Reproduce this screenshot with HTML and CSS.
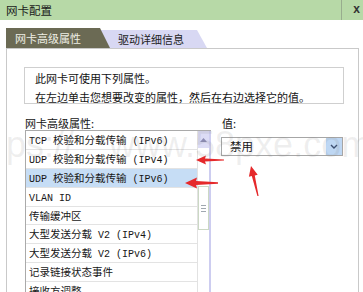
FILE: index.html
```html
<!DOCTYPE html>
<html lang="zh-CN">
<head>
<meta charset="utf-8">
<title>网卡配置</title>
<link rel="stylesheet" href="styles.css">
</head>
<body>
<div class="window">
  <div class="titlebar">
    <span class="title">网卡配置</span>
    <span class="close">x</span>
  </div>
  <div class="content">
    <div class="tabs">
      <div class="tab tab-active">网卡高级属性</div>
      <div class="tab tab-second">驱动详细信息</div>
    </div>
    <div class="panel">
      <div class="info">
        <p>此网卡可使用下列属性。</p>
        <p>在左边单击您想要改变的属性，然后在右边选择它的值。</p>
      </div>
      <div class="fields">
        <div class="col-left">
          <div class="label">网卡高级属性:</div>
          <div class="listbox">
            <ul class="items">
              <li><span class="lat">TCP </span>校验和分载传输<span class="lat"> (IPv6)</span></li>
              <li><span class="lat">UDP </span>校验和分载传输<span class="lat"> (IPv4)</span></li>
              <li class="sel"><span class="lat">UDP </span>校验和分载传输<span class="lat"> (IPv6)</span></li>
              <li><span class="lat">VLAN ID</span></li>
              <li>传输缓冲区</li>
              <li>大型发送分载<span class="lat"> V2 (IPv4)</span></li>
              <li>大型发送分载<span class="lat"> V2 (IPv6)</span></li>
              <li>记录链接状态事件</li>
              <li>接收方调整</li>
            </ul>
            <div class="scrollbar">
              <div class="sb-up">
                <svg width="7" height="4" viewBox="0 0 7 4"><path d="M0 4 L3.5 0 L7 4 Z" fill="#8c8cb4"/></svg>
              </div>
              <div class="sb-thumb">
                <span class="grip"></span>
              </div>
            </div>
          </div>
        </div>
        <div class="col-right">
          <div class="label label-value">值:</div>
          <div class="select">
            <span class="select-text">禁用</span>
            <span class="select-btn">
              <svg width="8" height="5" viewBox="0 0 8 5"><path d="M1 1 L4 4 L7 1" fill="none" stroke="#3d4f70" stroke-width="1.4"/></svg>
            </span>
          </div>
        </div>
      </div>
    </div>
  </div>
  <svg class="arrows" width="363" height="292" viewBox="0 0 363 292">
    <polygon points="196,160 206,155.5 205,158.6 224,159.4 224,160.6 205,161.4 206,164.5" fill="#e5292b"/>
    <polygon points="185,183 197,177.5 196,181 218,182.2 218,183.8 196,185 197,188.5" fill="#e5292b"/>
    <polygon points="251,166 257.7,174.7 254.8,175.4 258.6,195.9 257.4,196.1 251.8,176 248.9,176.7" fill="#e5292b"/>
  </svg>
  <div class="watermark">ps:// www.58pxe.com</div>
</div>
</body>
</html>
```
FILE: styles.css
```css
html, body {
  margin: 0;
  padding: 0;
}

body {
  background: #ffffff;
  font-family: "Noto Sans CJK SC", "Noto Sans", sans-serif;
  color: #151515;
}

.window {
  position: relative;
  width: 363px;
  height: 292px;
  overflow: hidden;
  background: #ffffff;
}

.titlebar {
  height: 20px;
  background: #b7d9a7;
  display: flex;
  align-items: center;
}

.title {
  flex: 1;
  padding-left: 6px;
  font-size: 11.5px;
  line-height: 20px;
  color: #1b1b1b;
}

.close {
  width: 22px;
  height: 20px;
  box-sizing: border-box;
  border-left: 1px solid #98ad8e;
  display: flex;
  align-items: center;
  justify-content: flex-end;
  padding-right: 3px;
  padding-bottom: 2px;
  font: bold 12px "Liberation Sans", sans-serif;
  color: #333333;
}

.content {
  padding: 8px 0 0 6px;
}

.tabs {
  display: flex;
  align-items: flex-end;
  height: 20px;
}

.tab {
  font-size: 11px;
  line-height: 1;
  display: flex;
  align-items: center;
  box-sizing: border-box;
  white-space: nowrap;
}

.tab-active {
  position: relative;
  z-index: 1;
  width: 104px;
  height: 20px;
  padding-left: 9px;
  background: #6b6a54;
  color: #eeeee4;
  clip-path: polygon(0 0, 94px 0, 100% 100%, 0 100%);
}

.tab-second {
  margin-left: -10px;
  width: 107px;
  height: 18px;
  padding-left: 18px;
  background: #d8d8f3;
  color: #222222;
  clip-path: polygon(0 0, 97px 0, 100% 100%, 0 100%);
}

.panel {
  width: 353px;
  height: 250px;
  box-sizing: border-box;
  border: 1px solid #c9c9c9;
  border-bottom: none;
  padding: 18px 0 0 17px;
}

.info {
  width: 320px;
  height: 37px;
  box-sizing: border-box;
  border: 1px solid #cfcfcf;
  padding: 1px 0 0 10px;
  font-size: 11px;
  line-height: 19px;
  color: #141414;
}

.info p {
  margin: 0;
  white-space: nowrap;
}

.fields {
  display: flex;
  margin-top: 13px;
  margin-left: 1px;
}

.col-left {
  width: 186px;
}

.label {
  height: 13px;
  font-size: 11px;
  line-height: 13px;
  color: #141414;
  white-space: nowrap;
}

.listbox {
  display: flex;
  height: 170px;
  border: 1px solid #aaaaaa;
  border-right: none;
  border-bottom: none;
}

.items {
  flex: 1;
  list-style: none;
  margin: 0;
  padding: 0;
  overflow: hidden;
}

.items li {
  height: 18.9px;
  box-sizing: border-box;
  border-bottom: 1px solid #e3e3e3;
  padding-left: 3px;
  font-family: "Noto Sans CJK SC", sans-serif;
  font-size: 10.5px;
  line-height: 18px;
  color: #161616;
  white-space: pre;
  overflow: hidden;
}

.items .lat {
  font-family: "Liberation Mono", "DejaVu Sans Mono", monospace;
  font-size: 10px;
}

.items li.sel {
  background: #c6ddf5;
}

.scrollbar {
  width: 14px;
  box-sizing: border-box;
  border-left: 1px solid #e2e2e2;
  border-right: 2px solid #cdcdf0;
  display: flex;
  flex-direction: column;
}

.sb-up {
  height: 17px;
  background: #dcdcf5;
  display: flex;
  align-items: center;
  justify-content: center;
}

.sb-thumb {
  margin-top: 38px;
  height: 44px;
  box-sizing: border-box;
  border: 1px solid #cbd8c4;
  background: #ffffff;
  display: flex;
  align-items: center;
  justify-content: center;
}

.grip {
  width: 5px;
  height: 5px;
  border-top: 1px solid #a0a8b0;
  border-bottom: 1px solid #a0a8b0;
}

.grip::after {
  content: "";
  display: block;
  margin-top: 2px;
  height: 1px;
  background: #a0a8b0;
}

.col-right {
  margin-left: 10px;
}

.label-value {
  padding-left: 1px;
}

.select {
  margin-top: 7px;
  width: 122px;
  height: 19px;
  box-sizing: border-box;
  border: 1px solid #a6a6a6;
  display: flex;
  align-items: center;
  background: #ffffff;
}

.select-text {
  flex: 1;
  padding-left: 8px;
  font-size: 11.5px;
  line-height: 17px;
  color: #141414;
}

.select-btn {
  width: 16px;
  height: 17px;
  background: #bed7f3;
  display: flex;
  align-items: center;
  justify-content: center;
}

.arrows {
  position: absolute;
  left: 0;
  top: 0;
  pointer-events: none;
}

.watermark {
  position: absolute;
  left: 6px;
  top: 125px;
  font-family: "Liberation Sans", sans-serif;
  font-size: 36px;
  line-height: 40px;
  word-spacing: 25px;
  color: rgba(120, 120, 120, 0.12);
  white-space: nowrap;
  pointer-events: none;
}
```
